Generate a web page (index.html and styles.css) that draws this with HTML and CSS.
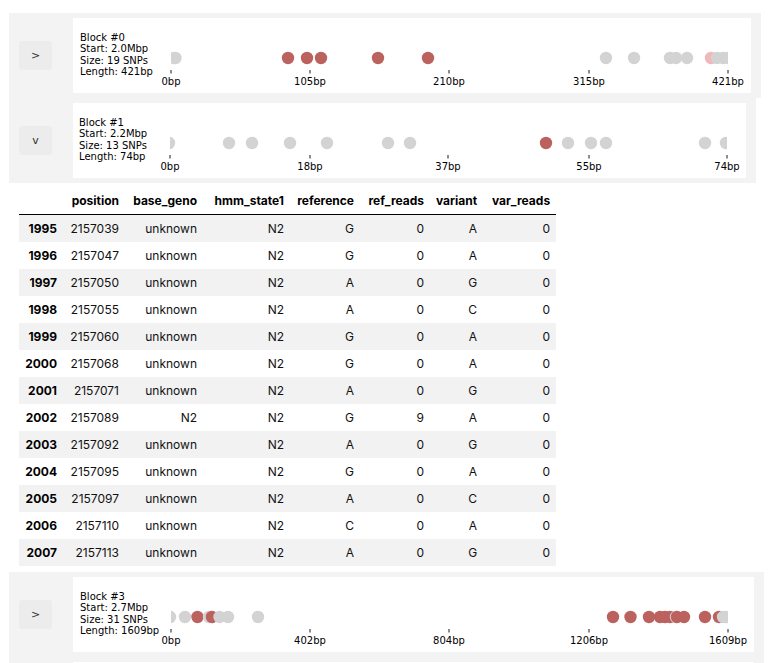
FILE: index.html
```html
<!DOCTYPE html>
<html>
<head>
<meta charset="utf-8">
<link rel="stylesheet" href="styles.css">
</head>
<body>
<div class="page">

  <div class="block">
    <button class="toggle">&gt;</button>
    <div class="card card-0">
      <svg class="fig" width="678" height="75" viewBox="0 0 678 75">
        <defs><clipPath id="c0"><rect x="98" y="0" width="557" height="75"/></clipPath></defs>
        <text class="info" x="7" y="22.7">Block #0</text>
        <text class="info" x="7" y="34.2">Start: 2.0Mbp</text>
        <text class="info" x="7" y="45.8">Size: 19 SNPs</text>
        <text class="info" x="7" y="57.3">Length: 421bp</text>
        <g clip-path="url(#c0)">
          <circle class="g" cx="101" cy="40" r="6.2"/>
          <circle class="g" cx="102.5" cy="40" r="6.2"/>
          <circle class="r" cx="215" cy="40" r="6.2"/>
          <circle class="r" cx="234" cy="40" r="6.2"/>
          <circle class="r" cx="248" cy="40" r="6.2"/>
          <circle class="r" cx="305" cy="40" r="6.2"/>
          <circle class="r" cx="355" cy="40" r="6.2"/>
          <circle class="g" cx="533" cy="40" r="6.2"/>
          <circle class="g" cx="561" cy="40" r="6.2"/>
          <circle class="g" cx="597" cy="40" r="6.2"/>
          <circle class="g" cx="603" cy="40" r="6.2"/>
          <circle class="g" cx="614" cy="40" r="6.2"/>
          <circle class="p" cx="638" cy="40" r="6.2"/>
          <circle class="g" cx="644" cy="40" r="6.2"/>
          <circle class="g" cx="650" cy="40" r="6.2"/>
          <circle class="g" cx="655" cy="40" r="6.2"/>
        </g>
        <g class="ticks">
          <line x1="98" y1="52" x2="98" y2="55.5"/>
          <line x1="237" y1="52" x2="237" y2="55.5"/>
          <line x1="376" y1="52" x2="376" y2="55.5"/>
          <line x1="516" y1="52" x2="516" y2="55.5"/>
          <line x1="655" y1="52" x2="655" y2="55.5"/>
        </g>
        <text class="lbl" x="98" y="66.5">0bp</text>
        <text class="lbl" x="237" y="66.5">105bp</text>
        <text class="lbl" x="376" y="66.5">210bp</text>
        <text class="lbl" x="516" y="66.5">315bp</text>
        <text class="lbl" x="655" y="66.5">421bp</text>
      </svg>
    </div>
  </div>

  <div class="block">
    <button class="toggle">v</button>
    <div class="card card-1">
      <svg class="fig" width="673" height="75" viewBox="0 0 673 75">
        <defs><clipPath id="c1"><rect x="97" y="0" width="557" height="75"/></clipPath></defs>
        <text class="info" x="6" y="22.7">Block #1</text>
        <text class="info" x="6" y="34.2">Start: 2.2Mbp</text>
        <text class="info" x="6" y="45.8">Size: 13 SNPs</text>
        <text class="info" x="6" y="57.3">Length: 74bp</text>
        <g clip-path="url(#c1)">
          <circle class="g" cx="96" cy="40" r="6.2"/>
          <circle class="g" cx="156" cy="40" r="6.2"/>
          <circle class="g" cx="179" cy="40" r="6.2"/>
          <circle class="g" cx="217" cy="40" r="6.2"/>
          <circle class="g" cx="254" cy="40" r="6.2"/>
          <circle class="g" cx="315" cy="40" r="6.2"/>
          <circle class="g" cx="337" cy="40" r="6.2"/>
          <circle class="r" cx="473" cy="40" r="6.2"/>
          <circle class="g" cx="495" cy="40" r="6.2"/>
          <circle class="g" cx="518" cy="40" r="6.2"/>
          <circle class="g" cx="533" cy="40" r="6.2"/>
          <circle class="g" cx="632" cy="40" r="6.2"/>
          <circle class="g" cx="653" cy="40" r="6.2"/>
        </g>
        <g class="ticks">
          <line x1="97" y1="52" x2="97" y2="55.5"/>
          <line x1="237" y1="52" x2="237" y2="55.5"/>
          <line x1="375" y1="52" x2="375" y2="55.5"/>
          <line x1="516" y1="52" x2="516" y2="55.5"/>
          <line x1="654" y1="52" x2="654" y2="55.5"/>
        </g>
        <text class="lbl" x="97" y="66.5">0bp</text>
        <text class="lbl" x="237" y="66.5">18bp</text>
        <text class="lbl" x="375" y="66.5">37bp</text>
        <text class="lbl" x="516" y="66.5">55bp</text>
        <text class="lbl" x="654" y="66.5">74bp</text>
      </svg>
    </div>
  </div>

  <table class="df">
    <thead>
      <tr><th class="c-idx"></th><th class="c-pos">position</th><th class="c-base">base_geno</th><th class="c-hmm">hmm_state1</th><th class="c-ref">reference</th><th class="c-rr">ref_reads</th><th class="c-var">variant</th><th class="c-vr">var_reads</th></tr>
    </thead>
    <tbody>
      <tr><th>1995</th><td>2157039</td><td>unknown</td><td>N2</td><td>G</td><td>0</td><td>A</td><td>0</td></tr>
      <tr><th>1996</th><td>2157047</td><td>unknown</td><td>N2</td><td>G</td><td>0</td><td>A</td><td>0</td></tr>
      <tr><th>1997</th><td>2157050</td><td>unknown</td><td>N2</td><td>A</td><td>0</td><td>G</td><td>0</td></tr>
      <tr><th>1998</th><td>2157055</td><td>unknown</td><td>N2</td><td>A</td><td>0</td><td>C</td><td>0</td></tr>
      <tr><th>1999</th><td>2157060</td><td>unknown</td><td>N2</td><td>G</td><td>0</td><td>A</td><td>0</td></tr>
      <tr><th>2000</th><td>2157068</td><td>unknown</td><td>N2</td><td>G</td><td>0</td><td>A</td><td>0</td></tr>
      <tr><th>2001</th><td>2157071</td><td>unknown</td><td>N2</td><td>A</td><td>0</td><td>G</td><td>0</td></tr>
      <tr><th>2002</th><td>2157089</td><td>N2</td><td>N2</td><td>G</td><td>9</td><td>A</td><td>0</td></tr>
      <tr><th>2003</th><td>2157092</td><td>unknown</td><td>N2</td><td>A</td><td>0</td><td>G</td><td>0</td></tr>
      <tr><th>2004</th><td>2157095</td><td>unknown</td><td>N2</td><td>G</td><td>0</td><td>A</td><td>0</td></tr>
      <tr><th>2005</th><td>2157097</td><td>unknown</td><td>N2</td><td>A</td><td>0</td><td>C</td><td>0</td></tr>
      <tr><th>2006</th><td>2157110</td><td>unknown</td><td>N2</td><td>C</td><td>0</td><td>A</td><td>0</td></tr>
      <tr><th>2007</th><td>2157113</td><td>unknown</td><td>N2</td><td>A</td><td>0</td><td>G</td><td>0</td></tr>
    </tbody>
  </table>

  <div class="block block-3">
    <button class="toggle">&gt;</button>
    <div class="card card-3">
      <svg class="fig" width="681" height="75" viewBox="0 0 681 75">
        <defs><clipPath id="c3"><rect x="98" y="0" width="557" height="75"/></clipPath></defs>
        <text class="info" x="7" y="22.7">Block #3</text>
        <text class="info" x="7" y="34.2">Start: 2.7Mbp</text>
        <text class="info" x="7" y="45.8">Size: 31 SNPs</text>
        <text class="info" x="7" y="57.3">Length: 1609bp</text>
        <g clip-path="url(#c3)">
          <circle class="g" cx="97" cy="40" r="6.2"/>
          <circle class="g" cx="112" cy="40" r="6.2"/>
          <circle class="r" cx="124.5" cy="40" r="6.2"/>
          <circle class="g" cx="136" cy="40" r="6.2"/>
          <circle class="r" cx="139" cy="40" r="6.2"/>
          <circle class="g" cx="146.5" cy="40" r="6.2"/>
          <circle class="g" cx="155" cy="40" r="6.2"/>
          <circle class="g" cx="185" cy="40" r="6.2"/>
          <circle class="r" cx="540" cy="40" r="6.2"/>
          <circle class="r" cx="557.5" cy="40" r="6.2"/>
          <circle class="r" cx="576" cy="40" r="6.2"/>
          <circle class="r" cx="587" cy="40" r="6.2"/>
          <circle class="r" cx="592" cy="40" r="6.2"/>
          <circle class="r" cx="597" cy="40" r="6.2"/>
          <circle class="g" cx="603" cy="40" r="6.2"/>
          <circle class="r" cx="604" cy="40" r="6.2"/>
          <circle class="r" cx="611" cy="40" r="6.2"/>
          <circle class="r" cx="632" cy="40" r="6.2"/>
          <circle class="r" cx="646" cy="40" r="6.2"/>
          <circle class="g" cx="650" cy="40" r="6.2"/>
          <circle class="g" cx="653" cy="40" r="6.2"/>
        </g>
        <g class="ticks">
          <line x1="98" y1="52" x2="98" y2="55.5"/>
          <line x1="237" y1="52" x2="237" y2="55.5"/>
          <line x1="376" y1="52" x2="376" y2="55.5"/>
          <line x1="516" y1="52" x2="516" y2="55.5"/>
          <line x1="655" y1="52" x2="655" y2="55.5"/>
        </g>
        <text class="lbl" x="98" y="66.5">0bp</text>
        <text class="lbl" x="237" y="66.5">402bp</text>
        <text class="lbl" x="376" y="66.5">804bp</text>
        <text class="lbl" x="516" y="66.5">1206bp</text>
        <text class="lbl" x="655" y="66.5">1609bp</text>
      </svg>
    </div>
  </div>

  <div class="block">
    <button class="toggle">&gt;</button>
    <div class="card card-3"></div>
  </div>

</div>
</body>
</html>
```

FILE: styles.css
```css
html, body {
  margin: 0;
  padding: 0;
  background: #ffffff;
}

.page {
  padding: 13px 0 0 9px;
  font-family: Inter, "Liberation Sans", sans-serif;
}

.block {
  display: flex;
  align-items: center;
  gap: 21px;
  width: max-content;
  padding: 5px 10px;
  background: #f3f3f3;
}

.toggle {
  width: 33px;
  height: 29px;
  margin: 0;
  padding: 0;
  border: none;
  border-radius: 3px;
  background: #ececec;
  color: #333333;
  font-family: "DejaVu Sans", sans-serif;
  font-size: 11px;
  line-height: 29px;
}

.card {
  height: 75px;
  background: #ffffff;
}

.card-0 { width: 678px; }
.card-1 { width: 673px; }
.card-3 { width: 681px; }

.fig {
  display: block;
}

.fig text {
  font-family: "DejaVu Sans", sans-serif;
  font-size: 10px;
  fill: #000000;
}

.fig .lbl {
  text-anchor: middle;
}

.fig .ticks line {
  stroke: #000000;
  stroke-width: 0.9;
}

.fig .g { fill: #d3d3d3; }
.fig .r { fill: #bb625e; }
.fig .p { fill: #f0b8bd; }

.df {
  margin: 4px 0 0 10px;
  border-collapse: collapse;
  border-spacing: 0;
  font-size: 12px;
  color: #111111;
}

.df thead {
  border-bottom: 1px solid #000000;
}

.df th,
.df td {
  box-sizing: border-box;
  padding: 6px 6px;
  line-height: 15px;
  text-align: right;
  vertical-align: middle;
  white-space: nowrap;
}

.df th {
  font-weight: 700;
  color: #000000;
}

.df .c-idx { width: 44px; }
.df .c-pos { width: 62px; }
.df .c-base { width: 78px; }
.df .c-hmm { width: 87px; }
.df .c-ref { width: 70px; }
.df .c-rr { width: 70px; }
.df .c-var { width: 53px; }
.df .c-vr { width: 73px; }

.df tbody tr:nth-child(odd) {
  background: #f2f2f2;
}

.block-3 {
  margin-top: 6px;
}
```
